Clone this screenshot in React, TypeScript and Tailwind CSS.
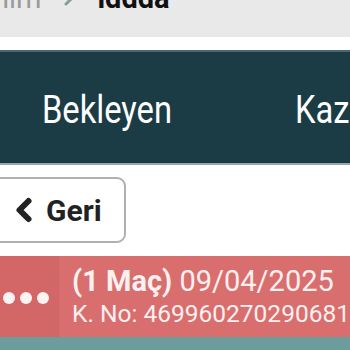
import { ChevronLeft, ChevronRight } from "lucide-react";

const App = () => {
  return (
    <div className="w-[350px] h-[350px] overflow-hidden bg-white font-['Roboto',sans-serif]">
      {/* Breadcrumb */}
      <div className="h-[37px] bg-[#e9e9e9] overflow-hidden">
        <div className="flex items-center gap-4 -mt-[19px] text-[29px] leading-[34px]">
          <span className="text-[#9a9a9a] -ml-[26px]">Anim</span>
          <ChevronRight className="h-6 w-6 text-[#8a9a9e]" strokeWidth={3} />
          <span className="font-bold text-[#111]">lddda</span>
        </div>
      </div>

      {/* Tabs */}
      <div className="mt-[13px] h-[115px] bg-[#1b3c44] border-t-2 border-[#4a6a70] border-b-2 border-b-[#9aa6a8] flex items-center">
        <div className="flex items-center pl-[42px] gap-[123px] text-[38px] text-white whitespace-nowrap pt-[6px]">
          <span className="inline-block w-[130px]">
            <span className="inline-block origin-left scale-x-[0.86]">Bekleyen</span>
          </span>
          <span className="inline-block">
            <span className="inline-block origin-left scale-x-[0.86]">Kazanan</span>
          </span>
        </div>
      </div>

      {/* Back button */}
      <div className="h-[91px] pt-[12px]">
        <button className="-ml-[12px] w-[138px] h-[66px] border-2 border-[#b0b0b0] rounded-[9px] bg-white flex items-center pl-[16px] gap-[4px] text-[30px] font-bold text-[#222]">
          <ChevronLeft className="h-9 w-9" strokeWidth={4} />
          <span>Geri</span>
        </button>
      </div>

      {/* Coupon row */}
      <div className="h-[81px] bg-[#d96e6e] flex">
        <div className="w-[62px] bg-[#d36666] flex items-center gap-[5px] pl-[3px] pt-[2px]">
          <span className="w-[12px] h-[12px] rounded-full bg-[#fdf3f3]" />
          <span className="w-[12px] h-[12px] rounded-full bg-[#fdf3f3]" />
          <span className="w-[12px] h-[12px] rounded-full bg-[#fdf3f3]" />
        </div>
        <div className="pl-[13px] pt-[8px] whitespace-nowrap text-[#fdf0f0]">
          <div className="text-[29px] leading-[35px]">
            <span className="font-bold">(1 Maç)</span> 09/04/2025
          </div>
          <div className="text-[24.5px] leading-[30px]">K. No: 469960270290681</div>
        </div>
      </div>

      {/* Next row */}
      <div className="h-[20px] bg-[#6c9c9c]" />
    </div>
  );
};

export default App;
